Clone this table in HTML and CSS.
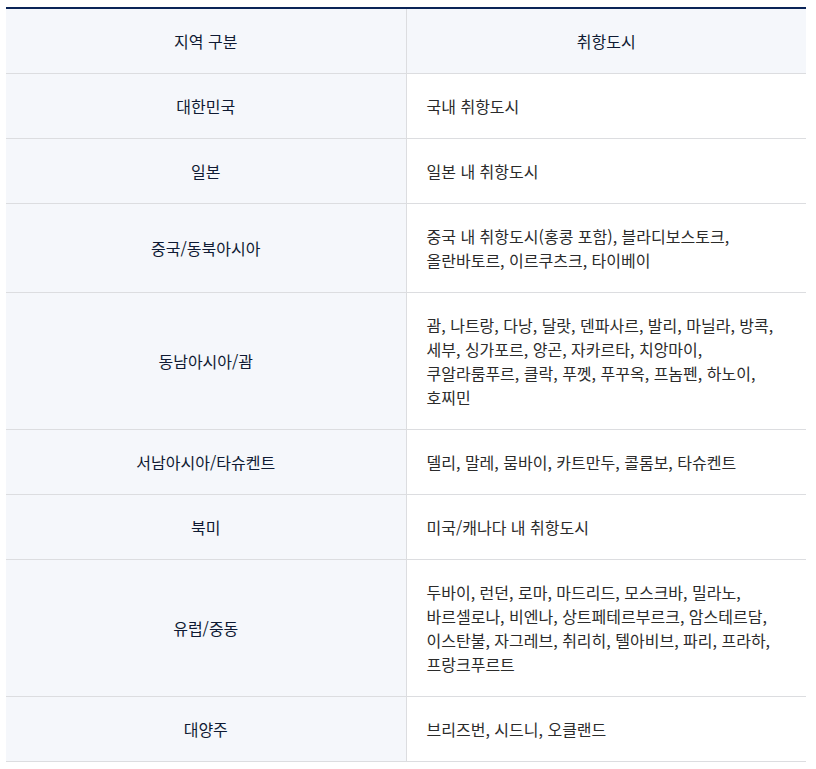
FILE: index.html
```html
<!DOCTYPE html>
<html lang="ko">
<head>
<meta charset="utf-8">
<link rel="stylesheet" href="styles.css">
</head>
<body>
<table class="routes">
  <colgroup><col class="col-region"><col class="col-cities"></colgroup>
  <thead>
    <tr><th class="region">지역 구분</th><th class="cities-h">취항도시</th></tr>
  </thead>
  <tbody>
    <tr><td class="region">대한민국</td><td class="cities">국내 취항도시</td></tr>
    <tr><td class="region">일본</td><td class="cities">일본 내 취항도시</td></tr>
    <tr><td class="region">중국/동북아시아</td><td class="cities">중국 내 취항도시(홍콩 포함), 블라디보스토크,<br>올란바토르, 이르쿠츠크, 타이베이</td></tr>
    <tr><td class="region">동남아시아/괌</td><td class="cities">괌, 나트랑, 다낭, 달랏, 덴파사르, 발리, 마닐라, 방콕,<br>세부, 싱가포르, 양곤, 자카르타, 치앙마이,<br>쿠알라룸푸르, 클락, 푸껫, 푸꾸옥, 프놈펜, 하노이,<br>호찌민</td></tr>
    <tr><td class="region">서남아시아/타슈켄트</td><td class="cities">델리, 말레, 뭄바이, 카트만두, 콜롬보, 타슈켄트</td></tr>
    <tr><td class="region">북미</td><td class="cities">미국/캐나다 내 취항도시</td></tr>
    <tr><td class="region">유럽/중동</td><td class="cities">두바이, 런던, 로마, 마드리드, 모스크바, 밀라노,<br>바르셀로나, 비엔나, 상트페테르부르크, 암스테르담,<br>이스탄불, 자그레브, 취리히, 텔아비브, 파리, 프라하,<br>프랑크푸르트</td></tr>
    <tr><td class="region">대양주</td><td class="cities">브리즈번, 시드니, 오클랜드</td></tr>
  </tbody>
</table>
</body>
</html>
```
FILE: styles.css
```css
html, body {
  margin: 0;
  padding: 0;
  background: #ffffff;
}
body {
  padding: 7px 10px 0 6px;
  font-family: "Noto Sans CJK KR", "Noto Sans", sans-serif;
  font-size: 16px;
  line-height: 24px;
}
.routes {
  width: 800px;
  border-collapse: collapse;
  border-top: 2px solid #0a2457;
  table-layout: fixed;
}
.col-region { width: 400px; }
.col-cities { width: 400px; }
.routes th, .routes td {
  box-sizing: border-box;
  padding: 20px 20px;
  border-bottom: 1px solid #dcdde0;
  vertical-align: middle;
  font-weight: 400;
}
.routes th {
  background: #f5f7fb;
  color: #0f1a33;
  text-align: center;
}
.routes th.region, .routes td.region {
  border-right: 1px solid #dcdde0;
}
.routes td.region {
  background: #f5f7fb;
  color: #0f1a33;
  text-align: center;
}
.routes td.cities {
  color: #2b2b2b;
  text-align: left;
  background: #ffffff;
  white-space: nowrap;
}
```
